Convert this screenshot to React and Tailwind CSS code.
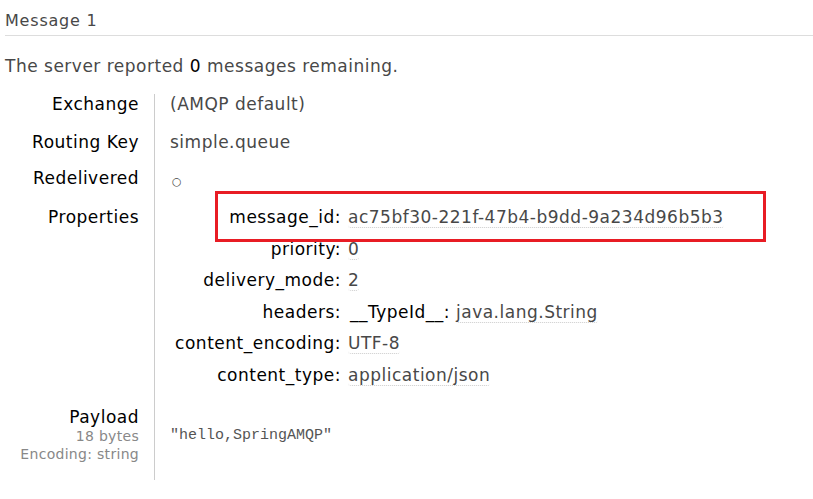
import React from "react";

const props = [
  { key: "message_id", value: "ac75bf30-221f-47b4-b9dd-9a234d96b5b3" },
  { key: "priority", value: "0" },
  { key: "delivery_mode", value: "2" },
  { key: "headers", header: "__TypeId__", value: "java.lang.String" },
  { key: "content_encoding", value: "UTF-8" },
  { key: "content_type", value: "application/json" },
];

const Val = ({ children }) => (
  <span className="border-b border-dotted border-[#ccc] rounded-[3px] text-[#484848]">
    {children}
  </span>
);

const Row = ({ label, children, className = "" }) => (
  <div className={`flex ${className}`}>
    <div className="w-[149px] shrink-0 pr-[15px] text-right text-black whitespace-nowrap">{label}</div>
    <div className="flex-1 border-l border-[#ccc] pl-[15px]">{children}</div>
  </div>
);

export default function App() {
  return (
    <div className="w-[813px] h-[499px] bg-white px-[5px] text-[17px] tracking-[0.5px] leading-[20px] text-[#484848] font-['DejaVu_Sans',Verdana,sans-serif] relative overflow-hidden">
      <h3 className="pt-[11px] pb-[4px] text-[16px] tracking-[0.8px] border-b border-[#ddd] mr-[-5px]">Message 1</h3>
      <p className="mt-[20px]">
        The server reported <span className="text-black">0</span> messages remaining.
      </p>

      <div className="mt-[18px]">
        <Row label="Exchange" className="h-[38px]">
          (AMQP default)
        </Row>
        <Row label="Routing Key" className="h-[36px]">
          simple.queue
        </Row>
        <Row label="Redelivered" className="h-[39px]">
          <span className="text-[11px] relative top-[1px] pl-[2px]">○</span>
        </Row>
        <Row label="Properties" className="h-[200px]">
          <div className="flex flex-col">
            {props.map((p) => (
              <div key={p.key} className="flex h-[31.5px]">
                <div className="w-[171px] shrink-0 text-right text-black whitespace-nowrap">{p.key}:</div>
                <div className="pl-[7px] whitespace-nowrap">
                  {p.header ? (
                    <>
                      <span className="text-black pl-[2px]">{p.header}:</span>{" "}
                      <Val>{p.value}</Val>
                    </>
                  ) : (
                    <Val>{p.value}</Val>
                  )}
                </div>
              </div>
            ))}
          </div>
        </Row>
        <Row
          label={
            <div>
              <div>Payload</div>
              <div className="text-[14px] tracking-[0.3px] leading-[18px] text-[#888]">18 bytes</div>
              <div className="text-[14px] tracking-[0.3px] leading-[18px] text-[#888]">Encoding: string</div>
            </div>
          }
          className="h-[73px]"
        >
          <div className="pt-[20px] text-[15px] tracking-normal leading-[18px] text-[#555] font-['Liberation_Mono',monospace]">
            ″hello,SpringAMQP″
          </div>
        </Row>
      </div>

      <div className="absolute left-[215px] top-[191px] w-[551px] h-[51px] border-[3px] border-[#e81c24]" />
    </div>
  );
}
